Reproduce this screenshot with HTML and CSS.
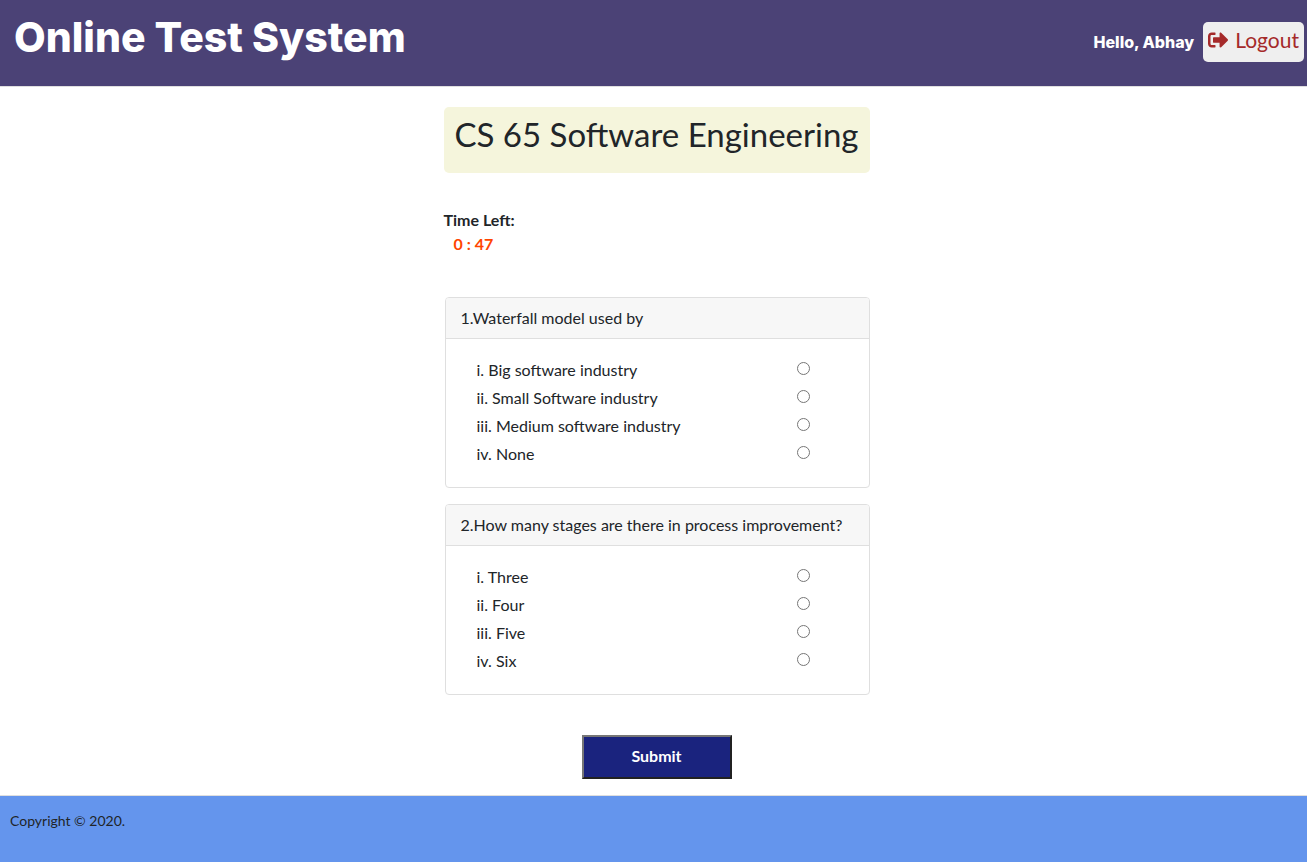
FILE: index.html
```html
<!DOCTYPE html>
<html lang="en">
<head>
<meta charset="utf-8">
<meta name="viewport" content="width=device-width, initial-scale=1">
<title>Online Test System</title>
<link rel="stylesheet" href="styles.css">
</head>
<body>
<header class="topbar">
  <h1 class="brand">Online Test System</h1>
  <div class="account">
    <span class="greeting">Hello, Abhay</span>
    <a class="logout" href="#logout">
      <svg class="logout-icon" viewBox="0 0 512 512" aria-hidden="true"><path fill="currentColor" d="M180 448H96c-53 0-96-43-96-96V160c0-53 43-96 96-96h84c7 0 12 5 12 12v40c0 7-5 12-12 12H96c-18 0-32 14-32 32v192c0 18 14 32 32 32h84c7 0 12 5 12 12v40c0 7-5 12-12 12zm325-209L337 71c-15-15-41-4-41 17v96H152c-13 0-24 11-24 24v96c0 13 11 24 24 24h144v96c0 21 26 32 41 17l168-168c9-9 9-25 0-34z"/></svg>
      <span>Logout</span>
    </a>
  </div>
</header>
<main class="content">
  <h2 class="subject">CS 65 Software Engineering</h2>
  <section class="timer">
    <div>Time Left:</div>
    <div class="remaining">0 : 47</div>
  </section>
  <form class="quiz">
    <fieldset class="card" aria-labelledby="q1">
      <div class="card-header" id="q1">1.Waterfall model used by</div>
      <div class="options">
        <label class="option" for="q1a"><span>i. Big software industry</span><input type="radio" id="q1a" name="q1"></label>
        <label class="option" for="q1b"><span>ii. Small Software industry</span><input type="radio" id="q1b" name="q1"></label>
        <label class="option" for="q1c"><span>iii. Medium software industry</span><input type="radio" id="q1c" name="q1"></label>
        <label class="option" for="q1d"><span>iv. None</span><input type="radio" id="q1d" name="q1"></label>
      </div>
    </fieldset>
    <fieldset class="card" aria-labelledby="q2">
      <div class="card-header" id="q2">2.How many stages are there in process improvement?</div>
      <div class="options">
        <label class="option" for="q2a"><span>i. Three</span><input type="radio" id="q2a" name="q2"></label>
        <label class="option" for="q2b"><span>ii. Four</span><input type="radio" id="q2b" name="q2"></label>
        <label class="option" for="q2c"><span>iii. Five</span><input type="radio" id="q2c" name="q2"></label>
        <label class="option" for="q2d"><span>iv. Six</span><input type="radio" id="q2d" name="q2"></label>
      </div>
    </fieldset>
    <button class="submit" type="submit">Submit</button>
  </form>
</main>
<footer class="footer">Copyright © 2020.</footer>
</body>
</html>
```
FILE: styles.css
```css
* {
  box-sizing: border-box;
}

body {
  display: flex;
  flex-direction: column;
  min-height: 100vh;
  margin: 0;
  background: #fff;
  color: #212529;
  font: 16px/24px Lato, sans-serif;
}

.topbar {
  display: flex;
  justify-content: space-between;
  align-items: flex-start;
  padding: 12px 3px 24px 14px;
  border-bottom: 1px solid #dfdfdf;
  background: #4b4276;
  color: #fff;
  font-family: Inter, sans-serif;
}

.brand {
  margin: 0;
  font-size: 41px;
  line-height: 50px;
  font-weight: 800;
}

.account {
  display: flex;
  align-items: center;
  gap: 9px;
  padding-top: 10px;
}

.greeting {
  font-size: 16px;
  font-weight: 800;
}

.logout {
  display: flex;
  align-items: center;
  gap: 7px;
  height: 40px;
  padding: 0 5px 4px;
  border-radius: 5px;
  background: #efefef;
  color: #a52a2a;
  font: 21px/24px Lato, sans-serif;
  text-decoration: none;
}

.logout-icon {
  width: 20px;
  height: 20px;
}

.content {
  width: 100%;
  max-width: 432px;
  margin: 0 auto;
  padding: 20px 0 16px 6px;
}

.subject {
  margin: 0;
  padding: 8px 5px 20px;
  border-radius: 5px;
  background: #f5f5dc;
  font-size: 33px;
  line-height: 38px;
  font-weight: 400;
  text-align: center;
}

.timer {
  padding: 35px 0 41px;
  font-weight: 700;
}

.remaining {
  padding-left: 10px;
  color: #ff4500;
}

.quiz {
  display: flex;
  flex-direction: column;
  gap: 16px;
}

.card {
  min-width: 0;
  margin: 0 0 0 1px;
  padding: 0;
  border: 1px solid #dfdfdf;
  border-radius: 4px;
}

.card-header {
  padding: 8px 15px;
  border-bottom: 1px solid #dfdfdf;
  border-radius: 3px 3px 0 0;
  background: #f7f7f7;
}

.options {
  padding: 17px 59px 19px 31px;
}

.option {
  display: flex;
  justify-content: space-between;
  align-items: flex-start;
  padding: 2px 0;
}

.option input {
  width: 13px;
  height: 13px;
  margin: 4px 0 0;
}

.submit {
  align-self: center;
  width: 150px;
  height: 44px;
  margin-top: 24px;
  padding: 0 0 2px;
  border: 2px solid;
  border-color: #767676 #212121 #212121 #767676;
  background: #1a237e;
  color: #fff;
  font: 700 16px/24px Lato, sans-serif;
}

.footer {
  flex: 1;
  padding: 13px 10px 28px;
  border-top: 1px solid #dfdfdf;
  background: #6495ed;
  font-size: 14px;
}
```
